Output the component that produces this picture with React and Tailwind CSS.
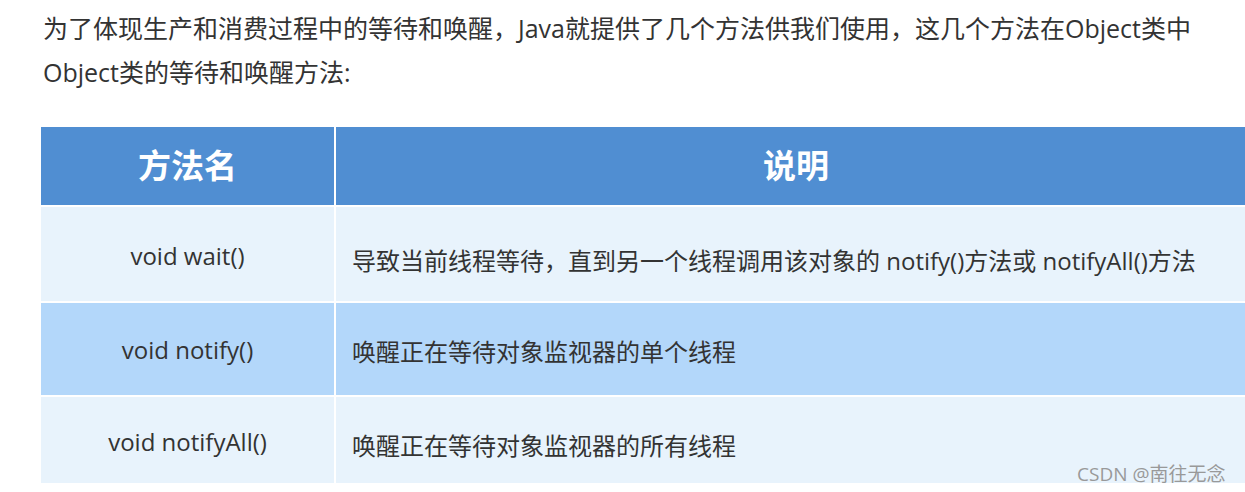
export default function App() {
  const rows = [
    {
      name: "void wait()",
      desc: "导致当前线程等待，直到另一个线程调用该对象的 notify()方法或 notifyAll()方法",
      bg: "bg-[#e8f3fc]",
      h: "h-[94px]",
      pa: "pt-[4px]",
      pb: "pt-[14px]",
    },
    {
      name: "void notify()",
      desc: "唤醒正在等待对象监视器的单个线程",
      bg: "bg-[#b3d7fa]",
      h: "h-[92px]",
      pa: "pt-[2px]",
      pb: "pt-[6px]",
    },
    {
      name: "void notifyAll()",
      desc: "唤醒正在等待对象监视器的所有线程",
      bg: "bg-[#e8f3fc]",
      h: "h-[86px]",
      pa: "pt-[4px]",
      pb: "pt-[12px]",
    },
  ];

  return (
    <div
      className="relative w-[1245px] h-[492px] overflow-hidden bg-white text-[#333]"
      style={{ fontFamily: '"Open Sans", "Noto Sans CJK SC", sans-serif' }}
    >
      <div className="pl-[43px] pt-[6px] text-[25px] leading-[44px] whitespace-nowrap">
        <p>为了体现生产和消费过程中的等待和唤醒，Java就提供了几个方法供我们使用，这几个方法在Object类中</p>
        <p>Object类的等待和唤醒方法:</p>
      </div>

      <div className="ml-[41px] mt-[33px] w-[1215px] grid grid-cols-[293px_920px] gap-[2px]">
        <div className="h-[78px] bg-[#508ed2] flex items-center justify-center text-white font-bold text-[33px]">
          方法名
        </div>
        <div className="h-[78px] bg-[#508ed2] flex items-center justify-center text-white font-bold text-[33px]">
          说明
        </div>
        {rows.map((r) => (
          <>
            <div
              key={r.name + "a"}
              className={`${r.h} ${r.bg} ${r.pa} flex items-center justify-center text-[24px] text-[#333]`}
            >
              {r.name}
            </div>
            <div
              key={r.name + "b"}
              className={`${r.h} ${r.bg} ${r.pb} flex items-center pl-[16px] text-[24px] text-[#333] whitespace-nowrap`}
            >
              {r.desc}
            </div>
          </>
        ))}
      </div>

      <div className="absolute left-[1077px] top-[460px] text-[19px] text-[#999] whitespace-nowrap">
        CSDN @南往无念
      </div>
    </div>
  );
}
